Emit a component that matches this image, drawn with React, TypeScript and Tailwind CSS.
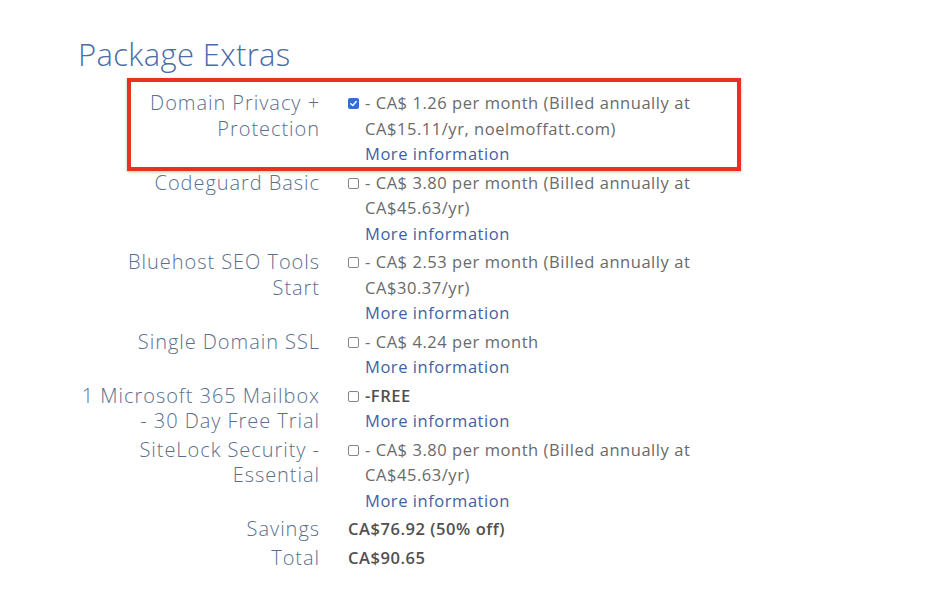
import React from 'react';

type Extra = {
  label: string[];
  checked?: boolean;
  price: React.ReactNode;
};

const EXTRAS: Extra[] = [
  {
    label: ['Domain Privacy +', 'Protection'],
    checked: true,
    price: (
      <>
        - CA$ 1.26 per month (Billed annually at
        <br />
        CA$15.11/yr, noelmoffatt.com)
      </>
    ),
  },
  {
    label: ['Codeguard Basic'],
    price: (
      <>
        - CA$ 3.80 per month (Billed annually at
        <br />
        CA$45.63/yr)
      </>
    ),
  },
  {
    label: ['Bluehost SEO Tools', 'Start'],
    price: (
      <>
        - CA$ 2.53 per month (Billed annually at
        <br />
        CA$30.37/yr)
      </>
    ),
  },
  {
    label: ['Single Domain SSL'],
    price: <>- CA$ 4.24 per month</>,
  },
  {
    label: ['1 Microsoft 365 Mailbox', '- 30 Day Free Trial'],
    price: <span className="font-semibold text-[#505050]">-FREE</span>,
  },
  {
    label: ['SiteLock Security -', 'Essential'],
    price: (
      <>
        - CA$ 3.80 per month (Billed annually at
        <br />
        CA$45.63/yr)
      </>
    ),
  },
];

const Checkbox: React.FC<{ checked?: boolean }> = ({ checked }) =>
  checked ? (
    <span className="mr-[6px] inline-flex h-[11px] w-[11px] translate-y-[1px] items-center justify-center rounded-[2px] bg-[#2f6fd6]">
      <svg viewBox="0 0 10 10" className="h-[9px] w-[9px]">
        <path d="M2 5.2 L4.2 7.3 L8 2.8" fill="none" stroke="#fff" strokeWidth="1.6" strokeLinecap="round" strokeLinejoin="round" />
      </svg>
    </span>
  ) : (
    <span className="mr-[6px] inline-block h-[11px] w-[11px] translate-y-[1px] rounded-[2px] border border-[#858585] bg-white" />
  );

const labelCls = 'text-right text-[20px] font-light tracking-[0.95px] text-[#5a6f8e]';

export default function App() {
  return (
    <div
      className="h-[614px] w-[950px] bg-white pl-[78px] pt-[34px]"
      style={{ fontFamily: '"Open Sans", "Noto Sans", sans-serif' }}
    >
      <h1 className="text-[31px] font-light leading-[40px] tracking-[0.35px] text-[#4a6da6]">Package Extras</h1>

      <div className="relative mt-[16px] grid grid-cols-[242px_1fr] gap-x-[28px] gap-y-[3px] leading-[25.5px]">
        {/* red highlight annotation */}
        <div className="pointer-events-none absolute left-[49px] top-[-12px] h-[93px] w-[614px] border-[4px] border-[#e8321e] shadow-[0_1px_3px_rgba(0,0,0,0.25)]" />

        {EXTRAS.map((x, i) => (
          <React.Fragment key={i}>
            <div className={labelCls}>
              {x.label.map((l, j) => (
                <div key={j}>{l}</div>
              ))}
            </div>
            <div className="text-[16.5px] tracking-[0.55px] text-[#6a6a6a]">
              <div className="flex items-start">
                <span className="flex h-[25.5px] items-center">
                  <Checkbox checked={x.checked} />
                </span>
                <span>{x.price}</span>
              </div>
              <div className="pl-[17px] text-[#3f62a3]">More information</div>
            </div>
          </React.Fragment>
        ))}

        <div className={labelCls}>Savings</div>
        <div className="text-[16.5px] font-semibold tracking-[0.55px] text-[#505050]">CA$76.92 (50% off)</div>
        <div className={labelCls}>Total</div>
        <div className="text-[16.5px] font-semibold tracking-[0.55px] text-[#505050]">CA$90.65</div>
      </div>
    </div>
  );
}
